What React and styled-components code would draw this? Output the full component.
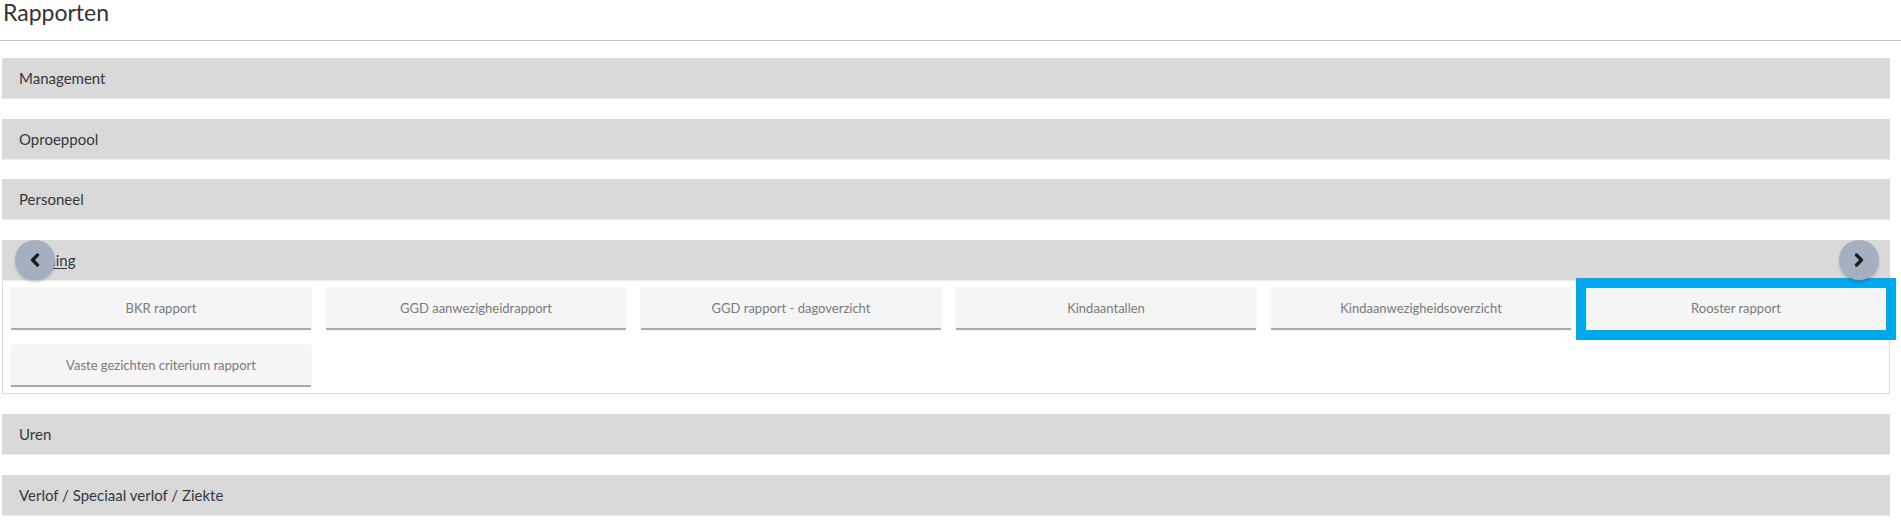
import React from 'react'
import styled, { createGlobalStyle } from 'styled-components'

const GlobalStyle = createGlobalStyle`
  body {
    margin: 0;
    background: #fff;
    font-family: Lato, "Open Sans", sans-serif;
    color: #333;
  }
`

const sections = [
  { id: 'management', title: 'Management' },
  { id: 'oproeppool', title: 'Oproeppool' },
  { id: 'personeel', title: 'Personeel' },
  {
    id: 'planning',
    title: 'Planning',
    open: true,
    reports: [
      'BKR rapport',
      'GGD aanwezigheidrapport',
      'GGD rapport - dagoverzicht',
      'Kindaantallen',
      'Kindaanwezigheidsoverzicht',
      'Rooster rapport',
      'Vaste gezichten criterium rapport',
    ],
    highlighted: 'Rooster rapport',
  },
  { id: 'uren', title: 'Uren' },
  { id: 'verlof', title: 'Verlof / Speciaal verlof / Ziekte' },
]

const Chevron = ({ dir }) => (
  <svg width="16" height="16" viewBox="0 0 16 16">
    <path
      d={dir === 'left' ? 'M10.5 3 L5.5 8 L10.5 13' : 'M5.5 3 L10.5 8 L5.5 13'}
      fill="none"
      stroke="#1b1b1b"
      strokeWidth="3.2"
      strokeLinecap="round"
      strokeLinejoin="round"
    />
  </svg>
)

export default function App() {
  return (
    <>
      <GlobalStyle />
      <PageHeader>
        <Title>Rapporten</Title>
      </PageHeader>
      <Content>
        {sections.map((s) => (
          <Section key={s.id}>
            <SectionBar>
              <SectionTitle $link={s.open}>{s.title}</SectionTitle>
              {s.open && (
                <>
                  <ArrowButton $side="left"><Chevron dir="left" /></ArrowButton>
                  <ArrowButton $side="right"><Chevron dir="right" /></ArrowButton>
                </>
              )}
            </SectionBar>
            {s.open && (
              <Panel>
                {s.reports.map((r) => (
                  <ReportButton key={r} $active={r === s.highlighted}>{r}</ReportButton>
                ))}
              </Panel>
            )}
          </Section>
        ))}
      </Content>
    </>
  )
}

const PageHeader = styled.div`
  border-bottom: 1px solid #c2c2c2;
  height: 41px;
  box-sizing: border-box;
  padding: 0 0 0 3px;
`

const Title = styled.h1`
  margin: 0;
  font-size: 23px;
  font-weight: 400;
  line-height: 25px;
  color: #333;
`

const Content = styled.div`
  margin: 17px 11px 0 2px;
`

const Section = styled.div`
  margin-bottom: 20.5px;
`

const SectionBar = styled.div`
  position: relative;
  height: 40px;
  background: #d9d9d9;
  box-shadow: 0 1px 0 #ececec;
  display: flex;
  align-items: center;
  padding: 0 17px;
`

const SectionTitle = styled.span`
  font-size: 15px;
  color: #34383c;
  text-decoration: ${(p) => (p.$link ? 'underline' : 'none')};
  text-underline-offset: 2px;
`

const ArrowButton = styled.div`
  position: absolute;
  top: 0;
  ${(p) => (p.$side === 'left' ? 'left: 13px;' : 'right: 11px;')}
  width: 40px;
  height: 40px;
  border-radius: 50%;
  background: #a4afbf;
  box-shadow: 0 2px 3px rgba(0, 0, 0, 0.18);
  display: flex;
  align-items: center;
  justify-content: center;
  z-index: 2;
`

const Panel = styled.div`
  border: 1px solid #dcdcdc;
  border-top: none;
  padding: 8px 3px 6px 8px;
  display: grid;
  grid-template-columns: repeat(6, 1fr);
  column-gap: 15px;
  row-gap: 15px;
`

const ReportButton = styled.div`
  height: 40px;
  background: #f5f5f5;
  border-bottom: 2px solid #a9a9a9;
  box-shadow: 0 0 2px rgba(0, 0, 0, 0.08);
  display: flex;
  align-items: center;
  justify-content: center;
  font-size: 13px;
  color: #7a7a7a;
  ${(p) =>
    p.$active &&
    `
    outline: 10px solid #00a8ec;
    outline-offset: 0;
    border-bottom-color: #f5f5f5;
    position: relative;
    z-index: 1;
  `}
`
